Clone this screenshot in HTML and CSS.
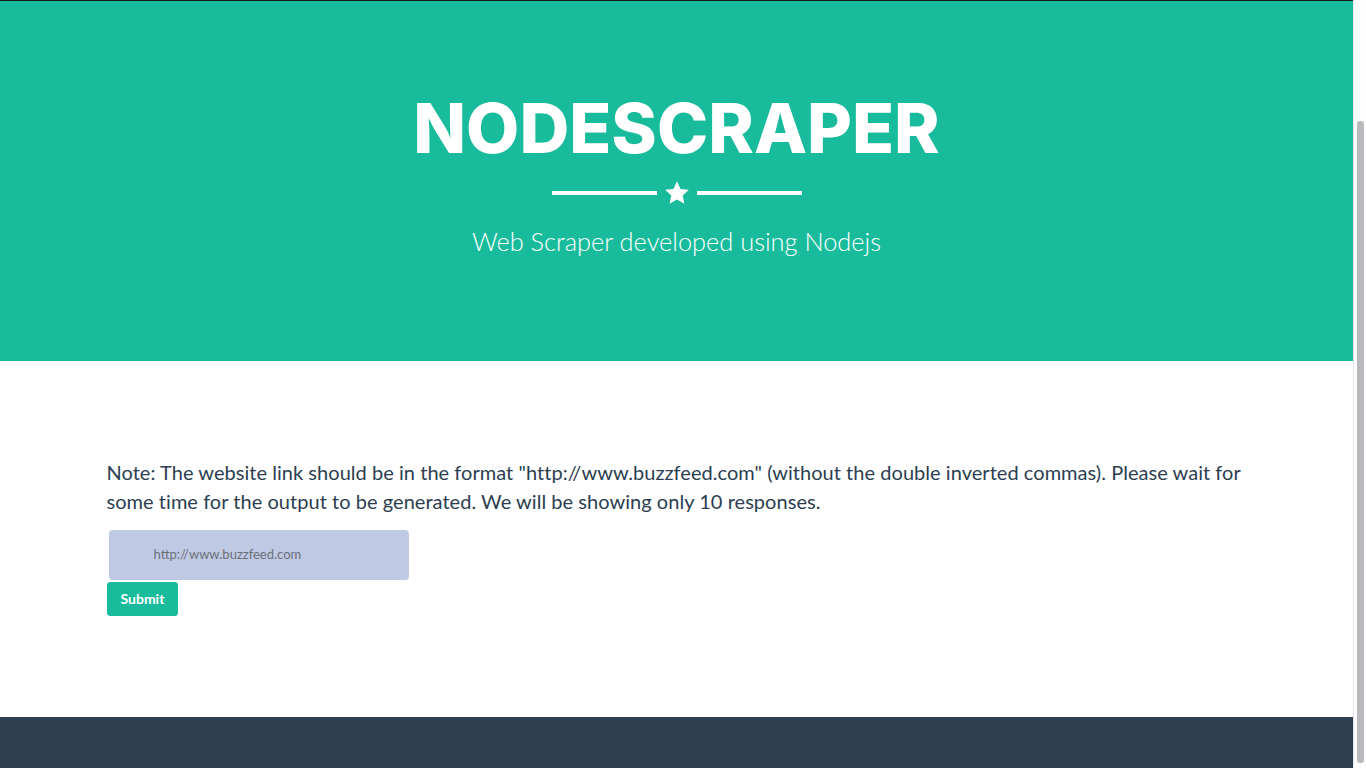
FILE: index.html
```html
<!DOCTYPE html>
<html lang="en">
<head>
<meta charset="utf-8">
<title>NodeScraper</title>
<link rel="stylesheet" href="styles.css">
</head>
<body>
<div class="page">
  <header class="hero">
    <h1 class="name">NODESCRAPER</h1>
    <div class="star-divider">
      <span class="line"></span>
      <svg class="star" viewBox="0 0 24 24" width="28" height="26"><path d="M12 1.2l3.3 7 7.6.9-5.6 5.2 1.5 7.6L12 18.1l-6.8 3.8 1.5-7.6L1.1 9.1l7.6-.9z" fill="#fff"/></svg>
      <span class="line"></span>
    </div>
    <p class="skills">Web Scraper developed using Nodejs</p>
  </header>
  <section class="main">
    <div class="container">
      <p class="note">Note: The website link should be in the format "http://www.buzzfeed.com" (without the double inverted commas). Please wait for some time for the output to be generated. We will be showing only 10 responses.</p>
      <form class="scrape-form">
        <input class="url-input" type="text" placeholder="http://www.buzzfeed.com">
        <button class="btn-submit" type="button">Submit</button>
      </form>
    </div>
  </section>
  <footer class="footer"></footer>
</div>
<div class="fake-scrollbar"><div class="thumb"></div></div>
</body>
</html>
```
FILE: styles.css
```css
html, body {
  margin: 0;
  padding: 0;
  height: 100%;
  overflow: hidden;
}
body {
  font-family: Lato, "Liberation Sans", sans-serif;
  color: #2c3e50;
  background: #fff;
}
.page {
  margin-right: 13px;
  display: flex;
  flex-direction: column;
  height: 768px;
}
.hero {
  background: #18bc9c;
  color: #fff;
  text-align: center;
  height: 361px;
  box-sizing: border-box;
  border-top: 1px solid #1a1a1a;
  padding-top: 93px;
  display: flex;
  flex-direction: column;
  align-items: center;
}
.name {
  margin: 0;
  font-family: Inter, "DejaVu Sans", sans-serif;
  font-weight: 800;
  font-size: 69px;
  line-height: 69px;
  letter-spacing: 0px;
}
.star-divider {
  display: flex;
  align-items: center;
  gap: 6px;
  margin-top: 17px;
  height: 26px;
}
.line {
  display: block;
  width: 105px;
  height: 4px;
  background: #fff;
}
.star { display: block; }
.skills {
  margin: 20px 0 0;
  font-size: 25.4px;
  font-weight: 300;
  line-height: 30px;
}
.main {
  padding: 97px 0 101px;
  flex: none;
}
.container {
  width: 1170px;
  margin: 0 auto;
  padding: 0 15px;
  box-sizing: border-box;
}
.note {
  margin: 0 0 13px;
  font-size: 20px;
  line-height: 1.42857;
  letter-spacing: 0.04px;
}
.scrape-form {
  display: flex;
  flex-direction: column;
  align-items: flex-start;
}
.url-input {
  margin: 2px 0 2px 2px;
  width: 300px;
  height: 50px;
  box-sizing: border-box;
  border: none;
  border-radius: 4px;
  background: #bfc9e4;
  padding: 0 0 2px 45px;
  font-family: Lato, sans-serif;
  font-size: 13px;
  color: #555;
}
.url-input::placeholder { color: #6b6f7a; }
.btn-submit {
  height: 34px;
  padding: 6px 13px;
  border: 1px solid #18bc9c;
  border-radius: 3px;
  background: #18bc9c;
  color: #fff;
  font-family: Lato, sans-serif;
  font-weight: 700;
  font-size: 14px;
  line-height: 20px;
}
.footer {
  flex: 1;
  background: #2c3e50;
}
.fake-scrollbar {
  position: fixed;
  top: 0;
  right: 0;
  width: 13px;
  height: 768px;
  background: #fdfdfd;
  border-left: 1px solid #e6e6e6;
  box-sizing: border-box;
}
.thumb {
  position: absolute;
  left: 3px;
  top: 121px;
  width: 7px;
  height: 642px;
  background: #b9b9bd;
  border-radius: 3px;
}
```
